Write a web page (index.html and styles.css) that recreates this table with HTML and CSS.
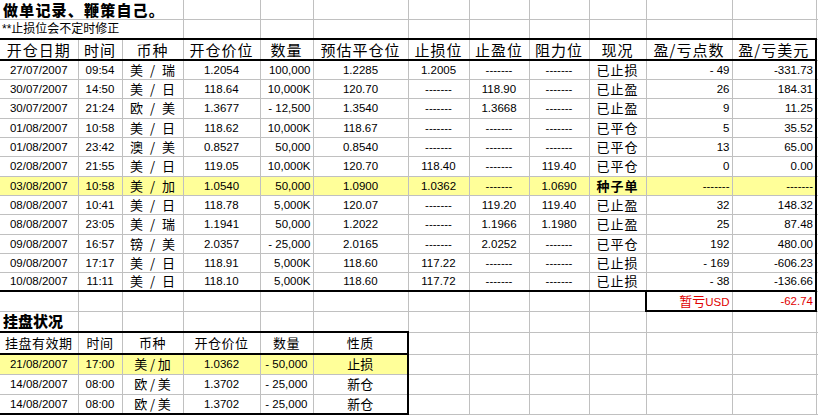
FILE: index.html
```html
<!DOCTYPE html>
<html lang="zh">
<head>
<meta charset="utf-8">
<title>做单记录</title>
<link rel="stylesheet" href="styles.css">
</head>
<body>
<table class="sheet">
<colgroup>
<col class="ca"><col class="cb"><col class="cc"><col class="cd"><col class="ce"><col class="cf"><col class="cg"><col class="ch"><col class="ci"><col class="cj"><col class="ck"><col class="cl"><col class="cm">
</colgroup>
<tbody>
<tr class="r-title first">
<td colspan="3" class="title">做单记录、鞭策自己。</td><td></td><td></td><td></td><td></td><td></td><td></td><td></td><td></td><td></td><td></td>
</tr>
<tr class="r-note">
<td colspan="3" class="note">**止损位会不定时修正</td><td></td><td></td><td></td><td></td><td></td><td></td><td></td><td></td><td></td><td></td>
</tr>
<tr class="hd main box-head">
<td>开仓日期</td><td>时间</td><td>币种</td><td>开仓价位</td><td>数量</td><td>预估平仓位</td><td>止损位</td><td>止盈位</td><td>阻力位</td><td>现况</td><td>盈/亏点数</td><td>盈/亏美元</td><td></td>
</tr>
<tr class="d main"><td>27/07/2007</td><td>09:54</td><td class="zh cur">美 / 瑞</td><td>1.2054</td><td class="r">100,000</td><td>1.2285</td><td>1.2005</td><td>-------</td><td>-------</td><td class="zh st">已止损</td><td class="r">- 49</td><td class="r">-331.73</td><td></td></tr>
<tr class="d main"><td>30/07/2007</td><td>14:50</td><td class="zh cur">美 / 日</td><td>118.64</td><td class="r">10,000K</td><td>120.70</td><td>-------</td><td>118.90</td><td>-------</td><td class="zh st">已止盈</td><td class="r">26</td><td class="r">184.31</td><td></td></tr>
<tr class="d main tall"><td>30/07/2007</td><td>21:24</td><td class="zh cur">欧 / 美</td><td>1.3677</td><td class="r">- 12,500</td><td>1.3540</td><td>-------</td><td>1.3668</td><td>-------</td><td class="zh st">已止盈</td><td class="r">9</td><td class="r">11.25</td><td></td></tr>
<tr class="d main"><td>01/08/2007</td><td>10:58</td><td class="zh cur">美 / 日</td><td>118.62</td><td class="r">10,000K</td><td>118.67</td><td>-------</td><td>-------</td><td>-------</td><td class="zh st">已平仓</td><td class="r">5</td><td class="r">35.52</td><td></td></tr>
<tr class="d main"><td>01/08/2007</td><td>23:42</td><td class="zh cur">澳 / 美</td><td>0.8527</td><td class="r">50,000</td><td>0.8540</td><td>-------</td><td>-------</td><td>-------</td><td class="zh st">已平仓</td><td class="r">13</td><td class="r">65.00</td><td></td></tr>
<tr class="d main tall"><td>02/08/2007</td><td>21:55</td><td class="zh cur">美 / 日</td><td>119.05</td><td class="r">10,000K</td><td>120.70</td><td>118.40</td><td>-------</td><td>119.40</td><td class="zh st">已平仓</td><td class="r">0</td><td class="r">0.00</td><td></td></tr>
<tr class="d main yl"><td>03/08/2007</td><td>10:58</td><td class="zh cur">美 / 加</td><td>1.0540</td><td class="r">50,000</td><td>1.0900</td><td>1.0362</td><td>-------</td><td>1.0690</td><td class="zh st seed">种子单</td><td class="r">-------</td><td class="r">-------</td><td></td></tr>
<tr class="d main"><td>08/08/2007</td><td>10:41</td><td class="zh cur">美 / 日</td><td>118.78</td><td class="r">5,000K</td><td>120.07</td><td>-------</td><td>119.20</td><td>119.40</td><td class="zh st">已止盈</td><td class="r">32</td><td class="r">148.32</td><td></td></tr>
<tr class="d main tall"><td>08/08/2007</td><td>23:05</td><td class="zh cur">美 / 瑞</td><td>1.1941</td><td class="r">50,000</td><td>1.2022</td><td>-------</td><td>1.1966</td><td>1.1980</td><td class="zh st">已止盈</td><td class="r">25</td><td class="r">87.48</td><td></td></tr>
<tr class="d main"><td>09/08/2007</td><td>16:57</td><td class="zh cur">镑 / 美</td><td>2.0357</td><td class="r">- 25,000</td><td>2.0165</td><td>-------</td><td>2.0252</td><td>-------</td><td class="zh st">已平仓</td><td class="r">192</td><td class="r">480.00</td><td></td></tr>
<tr class="d main"><td>09/08/2007</td><td>17:17</td><td class="zh cur">美 / 日</td><td>118.91</td><td class="r">5,000K</td><td>118.60</td><td>117.22</td><td>-------</td><td>-------</td><td class="zh st">已止损</td><td class="r">- 169</td><td class="r">-606.23</td><td></td></tr>
<tr class="d main main-last"><td>10/08/2007</td><td>11:11</td><td class="zh cur">美 / 日</td><td>118.10</td><td class="r">5,000K</td><td>118.60</td><td>117.72</td><td>-------</td><td>-------</td><td class="zh st">已止损</td><td class="r">- 38</td><td class="r">-136.66</td><td></td></tr>
<tr class="d total"><td></td><td></td><td></td><td></td><td></td><td></td><td></td><td></td><td></td><td></td><td class="r red sum-l"><span class="zh-in">暂亏</span>USD</td><td class="r red sum-r">-62.74</td><td></td></tr>
<tr class="r-sub"><td class="subtitle">挂盘状况</td><td></td><td></td><td></td><td></td><td></td><td></td><td></td><td></td><td></td><td></td><td></td><td></td></tr>
<tr class="hd2 pend pend-head"><td>挂盘有效期</td><td>时间</td><td>币种</td><td>开仓价位</td><td>数量</td><td>性质</td><td></td><td></td><td></td><td></td><td></td><td></td><td></td></tr>
<tr class="p pend yl2"><td>21/08/2007</td><td>17:00</td><td class="zh">美&thinsp;/&thinsp;加</td><td>1.0362</td><td class="r pr">- 50,000</td><td class="zh">止损</td><td></td><td></td><td></td><td></td><td></td><td></td><td></td></tr>
<tr class="p pend"><td>14/08/2007</td><td>08:00</td><td class="zh">欧&thinsp;/&thinsp;美</td><td>1.3702</td><td class="r pr">- 25,000</td><td class="zh">新仓</td><td></td><td></td><td></td><td></td><td></td><td></td><td></td></tr>
<tr class="p pend pend-last"><td>14/08/2007</td><td>08:00</td><td class="zh">欧&thinsp;/&thinsp;美</td><td>1.3702</td><td class="r pr">- 25,000</td><td class="zh">新仓</td><td></td><td></td><td></td><td></td><td></td><td></td><td></td></tr>
</tbody>
</table>
</body>
</html>
```

FILE: styles.css
```css
html, body {
  margin: 0;
  padding: 0;
  background: #fff;
  overflow: hidden;
}
body {
  font-family: "Liberation Sans", Arial, "Noto Sans CJK SC", sans-serif;
  font-size: 11.5px;
  color: #000;
}
.sheet {
  border-collapse: collapse;
  table-layout: fixed;
  width: 836px;
}
.ca { width: 78px; }
.cb { width: 44px; }
.cc { width: 61px; }
.cd { width: 77px; }
.ce { width: 53px; }
.cf { width: 95px; }
.cg { width: 61px; }
.ch { width: 60px; }
.ci { width: 60px; }
.cj { width: 57px; }
.ck { width: 86px; }
.cl { width: 84px; }
.cm { width: 20px; }

.sheet td {
  border: 1px solid #c0c0c0;
  padding: 0 2px;
  white-space: nowrap;
  overflow: hidden;
  text-align: center;
  vertical-align: middle;
  line-height: 14px;
}
.sheet td:first-child { border-left: none; }
.first td { border-top: none; }

.r-title { height: 19px; }
.r-note { height: 20px; }
.hd { height: 21px; }
.d { height: 19px; }
.d.tall { height: 20px; }
.total { height: 20px; }
.r-sub { height: 21px; }
.hd2 { height: 22px; }
.p { height: 20px; }

.sheet td.title {
  text-align: left;
  vertical-align: top;
  overflow: visible;
  font-family: "Noto Sans CJK SC", sans-serif;
  font-weight: 900;
  font-size: 15px;
  line-height: 16px;
  letter-spacing: 1.2px;
  padding: 2px 0 0 3px;
}
.sheet td.note {
  text-align: left;
  font-family: "Liberation Sans", "Noto Sans CJK SC", sans-serif;
  font-size: 12px;
  padding-left: 2px;
}
.sheet td.subtitle {
  text-align: left;
  font-family: "Noto Sans CJK SC", sans-serif;
  font-weight: 900;
  font-size: 15px;
  line-height: 18px;
  padding-left: 3px;
}
.hd td {
  font-family: "Noto Sans CJK SC", sans-serif;
  font-size: 15px;
  letter-spacing: 1px;
  font-weight: 400;
}
.hd2 td {
  font-family: "Noto Sans CJK SC", sans-serif;
  font-size: 13px;
  letter-spacing: 0.5px;
}
.zh {
  font-family: "Noto Sans CJK SC", sans-serif;
  font-size: 13px;
}
.cur { word-spacing: 4px; }
.st { letter-spacing: 1px; }
.seed { font-weight: 700; }
.zh-in {
  font-family: "Noto Sans CJK SC", sans-serif;
  font-size: 13px;
}
.sheet td.r { text-align: right; padding-right: 2px; }
.sheet td.pr { padding-right: 5px; }
.red { color: #e00000; }

/* Main table frame */
.box-head td:nth-child(-n+12) {
  border-top: 2px solid #000;
  border-bottom: 2px solid #000;
}
.main td:nth-child(12) { border-right: 2px solid #000; }
.main-last td:nth-child(-n+12) { border-bottom: 2px solid #000; }
.total .sum-l {
  border-left: 2px solid #000;
  border-bottom: 2px solid #000;
}
.total .sum-r {
  border-right: 2px solid #000;
  border-bottom: 2px solid #000;
}

/* Pending table frame */
.pend-head td:nth-child(-n+6) {
  border-top: 2px solid #000;
  border-bottom: 2px solid #000;
}
.pend td:nth-child(6) { border-right: 2px solid #000; }
.pend-last td:nth-child(-n+6) { border-bottom: 2px solid #000; }

.yl td:nth-child(-n+12) { background: #ffff99; }
.yl2 td:nth-child(-n+6) { background: #ffff99; }
```
